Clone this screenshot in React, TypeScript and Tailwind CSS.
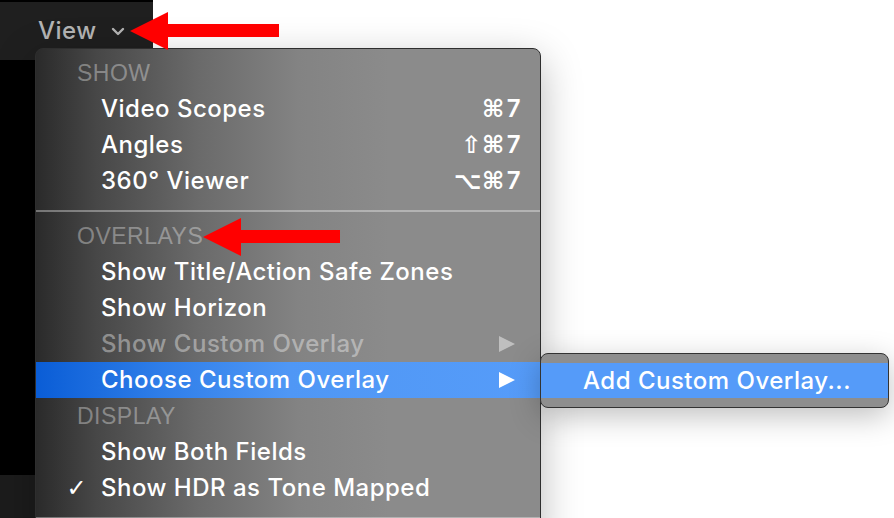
import React from 'react';

type Item =
  | { kind: 'header'; label: string }
  | { kind: 'sep' }
  | {
      kind: 'item';
      label: string;
      shortcut?: string;
      submenu?: boolean;
      disabled?: boolean;
      active?: boolean;
      checked?: boolean;
    };

const items: Item[] = [
  { kind: 'header', label: 'SHOW' },
  { kind: 'item', label: 'Video Scopes', shortcut: '⌘7' },
  { kind: 'item', label: 'Angles', shortcut: '⇧⌘7' },
  { kind: 'item', label: '360° Viewer', shortcut: '⌥⌘7' },
  { kind: 'sep' },
  { kind: 'header', label: 'OVERLAYS' },
  { kind: 'item', label: 'Show Title/Action Safe Zones' },
  { kind: 'item', label: 'Show Horizon' },
  { kind: 'item', label: 'Show Custom Overlay', submenu: true, disabled: true },
  { kind: 'item', label: 'Choose Custom Overlay', submenu: true, active: true },
  { kind: 'header', label: 'DISPLAY' },
  { kind: 'item', label: 'Show Both Fields' },
  { kind: 'item', label: 'Show HDR as Tone Mapped', checked: true },
  { kind: 'sep' },
];

function SubArrow({ dim }: { dim?: boolean }) {
  return (
    <svg width="18" height="18" viewBox="0 0 18 18" className="shrink-0">
      <polygon points="1,1 17,9 1,17" fill={dim ? 'rgba(255,255,255,0.45)' : '#ffffff'} />
    </svg>
  );
}

function RedArrow({ className, length }: { className: string; length: number }) {
  return (
    <svg width={length} height="38" viewBox={`0 0 ${length} 38`} className={className}>
      <polygon points={`0,19 38,0 38,12 ${length},12 ${length},25 38,25 38,38`} fill="#ff0000" />
    </svg>
  );
}

function MenuRow({ item }: { item: Item }) {
  if (item.kind === 'sep') {
    return <div className="mt-[11px] mb-[6px] h-[2px] bg-white/35" />;
  }
  if (item.kind === 'header') {
    return (
      <div className="h-9 flex items-center pl-[41px] font-['Liberation_Sans',Arial,sans-serif] text-[23px] text-white/35 tracking-[0.5px]">
        {item.label}
      </div>
    );
  }
  return (
    <div
      className={`h-9 flex items-center pr-[19px] ${
        item.active ? 'bg-[linear-gradient(to_right,#0a5dd6_0%,#2f7ee9_25%,#4f97f5_50%,#569cf9_100%)]' : ''
      }`}
    >
      <span className="w-[65px] shrink-0 text-right pr-[14px] font-['DejaVu_Sans',sans-serif] text-[24px]">
        {item.checked ? '✓' : ''}
      </span>
      <span className={`flex-1 ${item.disabled ? 'text-white/40' : 'text-white'}`}>{item.label}</span>
      {item.shortcut && (
        <span className="flex items-center gap-[2px] text-white">
          <span className="font-['DejaVu_Sans',sans-serif] text-[24px] font-bold">{item.shortcut.slice(0, -1)}</span>
          <span className="font-semibold">{item.shortcut.slice(-1)}</span>
        </span>
      )}
      {item.submenu && (
        <span className="pr-[5px]">
          <SubArrow dim={item.disabled} />
        </span>
      )}
    </div>
  );
}

export default function App() {
  return (
    <div className="relative w-[894px] h-[518px] overflow-hidden bg-white font-['Inter','Liberation_Sans',sans-serif] text-[24px] font-medium tracking-[0.5px] leading-none">
      {/* app window behind the menu */}
      <div className="w-[153px] h-full flex flex-col bg-black">
        <div className="mt-[2px] h-[58px] bg-[#1f1f1f] flex items-center pl-[38px] gap-[14px] text-[#b4b4b4]">
          <span>View</span>
          <svg width="14" height="9" viewBox="0 0 14 9">
            <path d="M2 2 L7 7 L12 2" stroke="#b4b4b4" strokeWidth="2.4" fill="none" strokeLinecap="round" strokeLinejoin="round" />
          </svg>
        </div>
        <div className="mt-[2px] flex-1" />
        <div className="h-[43px] bg-[#1c1c1c]" />
      </div>

      {/* View menu */}
      <div className="absolute left-[35px] top-[48px] w-[506px] h-[500px] rounded-[8px] border border-[#2e2e2e] pt-[6px] text-white shadow-[0_12px_40px_rgba(0,0,0,0.28)] bg-[linear-gradient(to_right,#2a2a2a_0%,#474747_12%,#6a6a6a_32%,#838383_52%,#8b8b8b_70%,#8b8b8b_100%)]">
        {items.map((item, i) => (
          <MenuRow key={i} item={item} />
        ))}
      </div>

      {/* submenu */}
      <div className="absolute left-[540px] top-[353px] w-[349px] h-[55px] rounded-[8px] border border-[#333] bg-[#8e8e8e] py-[9px] shadow-[0_8px_30px_rgba(0,0,0,0.25)]">
        <div className="h-full bg-[#559bf9] flex items-center pl-[42px] text-white">Add Custom Overlay...</div>
      </div>

      {/* annotation arrows */}
      <RedArrow className="absolute left-[130px] top-[12px]" length={149} />
      <RedArrow className="absolute left-[203px] top-[218px]" length={137} />
    </div>
  );
}
